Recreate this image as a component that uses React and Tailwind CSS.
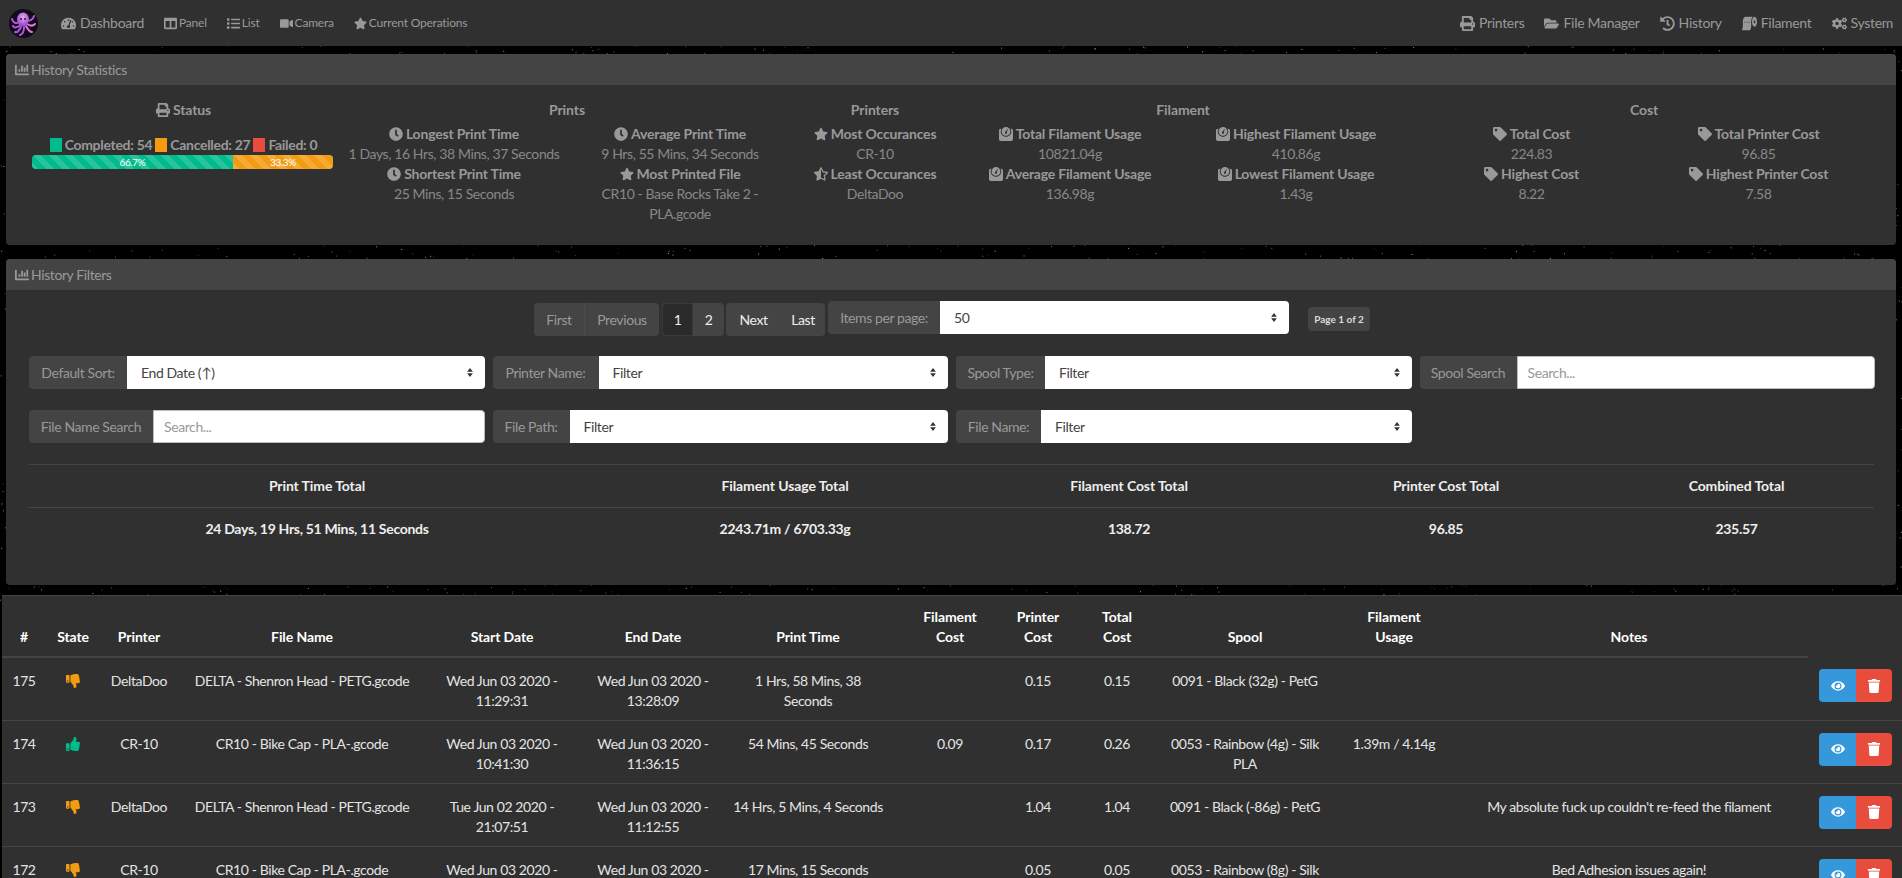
import {
  FaTachometerAlt, FaColumns, FaList, FaVideo, FaStar, FaStarHalfAlt, FaPrint, FaFolderOpen, FaHistory,
  FaToiletPaper, FaCogs, FaChartBar, FaClock, FaWeight, FaTag, FaThumbsUp, FaThumbsDown, FaEye, FaTrash,
} from "react-icons/fa"

// deterministic star field, only shows in the gaps between panels
const stars = Array.from({ length: 8000 }, (_, i) => {
    const a = Math.sin(i * 12.9898) * 43758.5453
    const b = Math.sin(i * 78.233) * 24634.6345
    const c = Math.sin(i * 37.719) * 9631.123
    return { x: (a - Math.floor(a)) * 1902, y: (b - Math.floor(b)) * 878, o: 0.2 + (c - Math.floor(c)) * 0.6 }
})

const Logo = () => (
    <svg width="29" height="29" viewBox="0 0 29 29">
        <defs>
            <radialGradient id="bodyGlow" cx="50%" cy="35%" r="60%">
                <stop offset="0%" stopColor="#e9a6f2" />
                <stop offset="100%" stopColor="#9a46c9" />
            </radialGradient>
        </defs>
        <circle cx="14.5" cy="14.5" r="14.5" fill="#120a1c" />
        <g fill="none" stroke="#b257d8" strokeWidth="2" strokeLinecap="round">
            <path d="M11 13C7 15 4 14 3 10" />
            <path d="M12 16C8 19 5 19 4 17" />
            <path d="M12 18C10 22 8 24 6 23" />
            <path d="M15 18C15 22 14 25 11 26" />
            <path d="M17 17C19 21 21 23 23 23" stroke="#e07ad8" />
            <path d="M18 15C21 17 24 17 26 15" stroke="#e07ad8" />
            <path d="M18 12C21 12 24 10 25 7" />
        </g>
        <ellipse cx="14" cy="10.5" rx="6" ry="7" fill="url(#bodyGlow)" />
        <circle cx="12" cy="10" r="1" fill="#2a1036" />
        <circle cx="16" cy="10" r="1" fill="#2a1036" />
    </svg>
)

const NavItem = ({ icon: Icon, label, small }) => (
    <span className={`flex items-center ${small ? "gap-[2px] text-xs tracking-[-0.2px]" : "gap-1 text-sm tracking-[-0.3px]"}`}>
        <Icon size={small ? 13 : 15} /> {label}
    </span>
)

const Card = ({ title, className, children }) => (
    <section className={`mx-[6px] rounded bg-[#303030] ${className}`}>
        <header className="flex h-[31px] items-center gap-[2px] rounded-t bg-[#444444] pl-[9px] text-sm text-[#999999]">
            <FaChartBar size={14} /> {title}
        </header>
        {children}
    </section>
)

const Stat = ({ icon: Icon, label, value }) => (
    <div className="text-center">
        <div className="flex items-center justify-center gap-[3px] font-bold tracking-[-0.2px] text-[#999999]">
            <Icon size={14} /> {label}
        </div>
        <div className="px-1 text-[#888888]">{value}</div>
    </div>
)

const StatGroup = ({ title, width, cols = 2, left, right }) => (
    <div style={{ width }} className="shrink-0">
        <h3 className="text-center font-bold tracking-[-0.1px] text-[#999999]">{title}</h3>
        <div className={`mt-1 grid ${cols === 2 ? "grid-cols-2" : "grid-cols-1"}`}>
            <div>{left}</div>
            {right && <div>{right}</div>}
        </div>
    </div>
)

const Caret = () => (
    <svg className="pointer-events-none absolute right-[12px] top-[12px]" width="6" height="9" viewBox="0 0 7 11">
        <path d="M3.5 0L7 4.5H0zM3.5 11L0 6.5h7z" fill="#333" />
    </svg>
)

const Addon = ({ label, labelW }) => (
    <span style={{ width: labelW }} className="flex h-[33px] shrink-0 items-center justify-center rounded-l bg-[#444444] text-sm text-[#999999]">
        {label}
    </span>
)

const SelectField = ({ label, labelW, value, className = "" }) => (
    <div className={`flex h-[33px] ${className}`}>
        <Addon label={label} labelW={labelW} />
        <div className="relative flex-1">
            <select className="h-[33px] w-full appearance-none rounded-r bg-white pl-[14px] text-sm text-[#444444]" defaultValue={value}>
                <option>{value}</option>
            </select>
            <Caret />
        </div>
    </div>
)

const SearchField = ({ label, labelW }) => (
    <div className="flex h-[33px]">
        <Addon label={label} labelW={labelW} />
        <input placeholder="Search..." className="h-[33px] min-w-0 flex-1 rounded-r border border-[#bbbbbb] bg-white pl-[10px] text-sm placeholder:text-[#999999]" />
    </div>
)

const rows = [
    { id: 175, ok: false, printer: "DeltaDoo", file: "DELTA - Shenron Head - PETG.gcode", start: "Wed Jun 03 2020 -\n11:29:31", end: "Wed Jun 03 2020 -\n13:28:09", time: "1 Hrs, 58 Mins, 38\nSeconds", fCost: "", pCost: "0.15", total: "0.15", spool: "0091 - Black (32g) - PetG", usage: "", notes: "" },
    { id: 174, ok: true, printer: "CR-10", file: "CR10 - Bike Cap - PLA-.gcode", start: "Wed Jun 03 2020 -\n10:41:30", end: "Wed Jun 03 2020 -\n11:36:15", time: "54 Mins, 45 Seconds", fCost: "0.09", pCost: "0.17", total: "0.26", spool: "0053 - Rainbow (4g) - Silk\nPLA", usage: "1.39m / 4.14g", notes: "" },
    { id: 173, ok: false, printer: "DeltaDoo", file: "DELTA - Shenron Head - PETG.gcode", start: "Tue Jun 02 2020 -\n21:07:51", end: "Wed Jun 03 2020 -\n11:12:55", time: "14 Hrs, 5 Mins, 4 Seconds", fCost: "", pCost: "1.04", total: "1.04", spool: "0091 - Black (-86g) - PetG", usage: "", notes: "My absolute fuck up couldn't re-feed the filament" },
    { id: 172, ok: false, printer: "CR-10", file: "CR10 - Bike Cap - PLA-.gcode", start: "Wed Jun 03 2020 -\n10:11:30", end: "Wed Jun 03 2020 -\n10:28:45", time: "17 Mins, 15 Seconds", fCost: "", pCost: "0.05", total: "0.05", spool: "0053 - Rainbow (8g) - Silk\nPLA", usage: "", notes: "Bed Adhesion issues again!" },
]

// label, width, extra cell padding
const columns = [
    ["#", 44, ""], ["State", 54, ""], ["Printer", 78, ""], ["File Name", 248, ""], ["Start Date", 152, ""], ["End Date", 150, ""], ["Print Time", 160, ""],
    ["Filament\nCost", 124, ""], ["Printer\nCost", 52, ""], ["Total\nCost", 94, "pl-3"], ["Spool", 174, ""], ["Filament\nUsage", 136, "pr-3"], ["Notes", 340, "pr-[18px]"],
]

const totals = [
    ["Print Time Total", "24 Days, 19 Hrs, 51 Mins, 11 Seconds", 576],
    ["Filament Usage Total", "2243.71m / 6703.33g", 360],
    ["Filament Cost Total", "138.72", 328],
    ["Printer Cost Total", "96.85", 306],
    ["Combined Total", "235.57", 275],
]

export default function App() {
    return (
        <div className="relative h-screen overflow-hidden bg-black font-[Lato,'Liberation_Sans',sans-serif] text-sm leading-5 tracking-[-0.4px]">
            <svg className="absolute inset-0" width="1902" height="878">
                {stars.map((s, i) => <rect key={i} x={s.x} y={s.y} width="1" height="1" fill="#c8c8d8" opacity={s.o} />)}
            </svg>

            <div className="relative">
                <nav className="flex h-[46px] items-center bg-[#303030] pl-[9px] pr-[9px] text-[#999999]">
                    <Logo />
                    <div className="ml-[23px] flex items-center gap-5">
                        <NavItem icon={FaTachometerAlt} label="Dashboard" />
                        <NavItem small icon={FaColumns} label="Panel" />
                        <NavItem small icon={FaList} label="List" />
                        <NavItem small icon={FaVideo} label="Camera" />
                        <NavItem small icon={FaStar} label="Current Operations" />
                    </div>
                    <div className="ml-auto flex items-center gap-5">
                        <NavItem icon={FaPrint} label="Printers" />
                        <NavItem icon={FaFolderOpen} label="File Manager" />
                        <NavItem icon={FaHistory} label="History" />
                        <NavItem icon={FaToiletPaper} label="Filament" />
                        <NavItem icon={FaCogs} label="System" />
                    </div>
                </nav>

                <Card title="History Statistics" className="mt-2 h-[191px]">
                    <div className="flex pl-5 pt-[15px]">
                        <div className="w-[315px] shrink-0">
                            <h3 className="flex items-center justify-center gap-[3px] font-bold tracking-[-0.1px] text-[#999999]"><FaPrint size={14} /> Status</h3>
                            <div className="mt-[15px] flex items-center justify-center gap-[3px] font-bold tracking-[-0.3px] text-[#999999]">
                                <span className="h-[14px] w-3 bg-[#00bc8c]" /> Completed: 54
                                <span className="h-[14px] w-3 bg-[#f39c12]" /> Cancelled: 27
                                <span className="h-[14px] w-3 bg-[#e74c3c]" /> Failed: 0
                            </div>
                            <div className="mx-[6px] flex h-[14px] w-[301px] overflow-hidden rounded bg-[#444444] text-[10px] leading-[14px] text-white">
                                <div className="w-[66.7%] bg-[#00bc8c] bg-[linear-gradient(45deg,rgba(255,255,255,.15)_25%,transparent_25%,transparent_50%,rgba(255,255,255,.15)_50%,rgba(255,255,255,.15)_75%,transparent_75%,transparent)] bg-[length:16px_16px] text-center">66.7%</div>
                                <div className="w-[33.3%] bg-[#f39c12] bg-[linear-gradient(45deg,rgba(255,255,255,.15)_25%,transparent_25%,transparent_50%,rgba(255,255,255,.15)_50%,rgba(255,255,255,.15)_75%,transparent_75%,transparent)] bg-[length:16px_16px] text-center">33.3%</div>
                            </div>
                        </div>
                        <StatGroup
                            title="Prints" width={452}
                            left={<><Stat icon={FaClock} label="Longest Print Time" value="1 Days, 16 Hrs, 38 Mins, 37 Seconds" /><Stat icon={FaClock} label="Shortest Print Time" value="25 Mins, 15 Seconds" /></>}
                            right={<><Stat icon={FaClock} label="Average Print Time" value="9 Hrs, 55 Mins, 34 Seconds" /><Stat icon={FaStar} label="Most Printed File" value="CR10 - Base Rocks Take 2 - PLA.gcode" /></>}
                        />
                        <StatGroup
                            title="Printers" width={164} cols={1}
                            left={<><Stat icon={FaStar} label="Most Occurances" value="CR-10" /><Stat icon={FaStarHalfAlt} label="Least Occurances" value="DeltaDoo" /></>}
                        />
                        <StatGroup
                            title="Filament" width={452}
                            left={<><Stat icon={FaWeight} label="Total Filament Usage" value="10821.04g" /><Stat icon={FaWeight} label="Average Filament Usage" value="136.98g" /></>}
                            right={<><Stat icon={FaWeight} label="Highest Filament Usage" value="410.86g" /><Stat icon={FaWeight} label="Lowest Filament Usage" value="1.43g" /></>}
                        />
                        <StatGroup
                            title="Cost" width={470}
                            left={<div className="pl-[10px]"><Stat icon={FaTag} label="Total Cost" value="224.83" /><Stat icon={FaTag} label="Highest Cost" value="8.22" /></div>}
                            right={<div className="pr-[6px]"><Stat icon={FaTag} label="Total Printer Cost" value="96.85" /><Stat icon={FaTag} label="Highest Printer Cost" value="7.58" /></div>}
                        />
                    </div>
                </Card>

                <Card title="History Filters" className="mt-[14px] h-[326px]">
                    <div className="pl-[23px] pr-[21px] pt-[11px]">
                        <div className="flex items-start pl-[505px]">
                            <div className="mt-[2px] flex h-[33px] w-[125px] items-center rounded bg-[#444444] text-[#999999]">
                                <span className="flex h-full w-[51px] items-center justify-center border-r border-[#4c4c4c]">First</span>
                                <span className="flex-1 text-center">Previous</span>
                            </div>
                            <div className="ml-[3px] mt-[2px] flex h-[33px] w-[62px] items-center rounded bg-[#444444] text-[#eeeeee]">
                                <span className="flex h-full w-[31px] items-center justify-center rounded-l border border-[#3a3a3a] bg-[#2a2a2a]">1</span>
                                <span className="flex-1 text-center">2</span>
                            </div>
                            <div className="ml-[2px] mt-[2px] flex h-[33px] w-[99px] items-center rounded bg-[#444444] text-[#eeeeee]">
                                <span className="flex-1 text-center">Next</span>
                                <span className="w-[44px] text-center">Last</span>
                            </div>
                            <SelectField label="Items per page:" labelW={112} value="50" className="ml-[3px] w-[461px]" />
                            <span className="ml-[19px] mt-[6px] flex h-6 w-[62px] items-center justify-center rounded bg-[#444444] text-[10px] font-bold tracking-normal text-[#dddddd]">Page 1 of 2</span>
                        </div>

                        <div className="mt-[20px] grid grid-cols-4 gap-x-2 gap-y-[21px]">
                            <SelectField label="Default Sort:" labelW={98} value="End Date (↑)" />
                            <SelectField label="Printer Name:" labelW={106} value="Filter" />
                            <SelectField label="Spool Type:" labelW={89} value="Filter" />
                            <SearchField label="Spool Search" labelW={97} />
                            <SearchField label="File Name Search" labelW={124} />
                            <SelectField label="File Path:" labelW={77} value="Filter" />
                            <SelectField label="File Name:" labelW={85} value="Filter" />
                        </div>

                        <table className="mt-[21px] w-[1845px] table-fixed border-t border-[#444444] text-center text-[#eeeeee]">
                            <colgroup>{totals.map(t => <col key={t[0]} style={{ width: t[2] }} />)}</colgroup>
                            <thead>
                                <tr className="h-[43px] border-b border-[#444444]">
                                    {totals.map(t => <th key={t[0]} className="font-bold tracking-[-0.1px]">{t[0]}</th>)}
                                </tr>
                            </thead>
                            <tbody>
                                <tr className="h-[43px]">
                                    {totals.map(t => <td key={t[0]} className="font-bold tracking-[-0.3px]">{t[1]}</td>)}
                                </tr>
                            </tbody>
                        </table>
                    </div>
                </Card>

                <div className="ml-[2px] mt-[10px] border-t border-[#444444] bg-[#303030]">
                    <table className="w-[1900px] table-fixed border-collapse text-center text-[#e4e4e4]">
                        <colgroup>
                            {columns.map(c => <col key={c[0]} style={{ width: c[1] }} />)}
                            <col />
                        </colgroup>
                        <thead>
                            <tr className="h-[61px]">
                                {columns.map(c => (
                                    <th key={c[0]} className={`whitespace-pre border-b-2 border-[#444444] pb-[9px] align-bottom font-bold tracking-[-0.1px] text-white ${c[2]}`}>{c[0]}</th>
                                ))}
                                <th />
                            </tr>
                        </thead>
                        <tbody>
                            {rows.map(r => (
                                <tr key={r.id} className="h-[63px] border-b border-[#444444] [&>td]:whitespace-pre [&>td]:pt-[13px] [&>td]:align-top">
                                    <td>{r.id}</td>
                                    <td>
                                        <div className="flex h-5 items-center justify-center">
                                            {r.ok ? <FaThumbsUp size={14} className="text-[#00bc8c]" /> : <FaThumbsDown size={14} className="text-[#f39c12]" />}
                                        </div>
                                    </td>
                                    <td>{r.printer}</td>
                                    <td>{r.file}</td>
                                    <td>{r.start}</td>
                                    <td>{r.end}</td>
                                    <td>{r.time}</td>
                                    <td>{r.fCost}</td>
                                    <td>{r.pCost}</td>
                                    <td className="pl-3">{r.total}</td>
                                    <td>{r.spool}</td>
                                    <td className="pr-3">{r.usage}</td>
                                    <td className="pr-[18px]">{r.notes}</td>
                                    <td className="!pt-[12px]">
                                        <div className="ml-[11px] flex h-[33px] w-[73px] text-white">
                                            <span className="flex w-[37px] items-center justify-center rounded-l bg-[#3498db]"><FaEye size={14} /></span>
                                            <span className="flex flex-1 items-center justify-center rounded-r bg-[#e74c3c]"><FaTrash size={14} /></span>
                                        </div>
                                    </td>
                                </tr>
                            ))}
                        </tbody>
                    </table>
                </div>
            </div>
        </div>
    )
}
